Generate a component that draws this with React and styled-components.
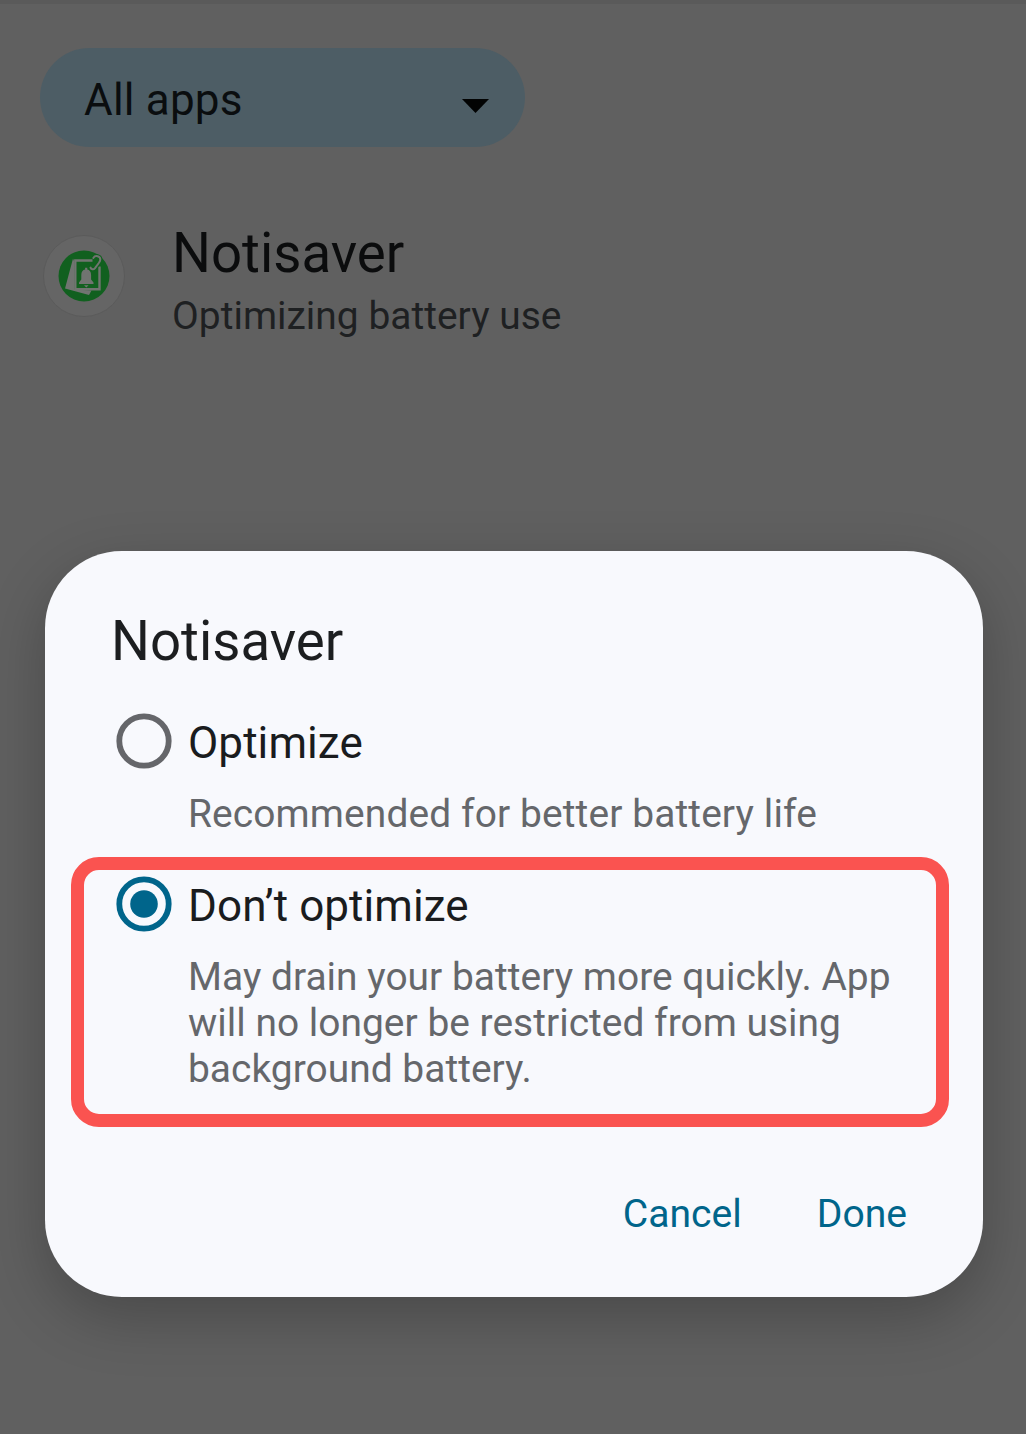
import React from "react";
import styled, { createGlobalStyle } from "styled-components";

const Global = createGlobalStyle`
  *{box-sizing:border-box}
  body{margin:0;background:#606060;font-family:Roboto,sans-serif}
`;
const Screen = styled.main`
  height:1434px;overflow:hidden;background:#606060;border-top:4px solid #5a5a5a;
  display:flex;flex-direction:column;align-items:flex-start;
`;
const Select = styled.button`
  width:485px;height:99px;margin:44px 0 0 40px;padding:5px 36px 0 44px;border:0;border-radius:50px;
  background:#4d5d65;color:#0a0d0f;display:flex;align-items:center;justify-content:space-between;
  font:400 44px/52px Roboto,sans-serif;letter-spacing:.2px;
`;
const Caret = styled.svg`width:27px;height:14px;margin-top:11px;`;
const AppRow = styled.section`
  display:flex;height:130px;margin:76px 0 0 43px;
`;
const AppIcon = styled.svg`width:82px;height:82px;margin:12px 47px 0 0;`;
const Names = styled.div`display:flex;flex-direction:column;`;
const AppName = styled.div`font-size:54.6px;line-height:64px;color:#0b0c0d;margin-top:-2px;`;
const Status = styled.div`font-size:38.9px;line-height:46px;letter-spacing:.03px;color:#1e2022;margin-top:8px;`;
const Dialog = styled.section`
  width:938px;height:746px;flex:none;margin:198px 0 0 45px;padding:58px 34px 0 26px;border-radius:77px;background:#f8f9fd;
  display:flex;flex-direction:column;box-shadow:0 20px 60px rgba(0,0,0,.24);
`;
const Title = styled.h1`margin:0 0 0 40px;font-weight:400;font-size:54.6px;line-height:64px;color:#1c1e20;`;
const Option = styled.div`
  display:flex;border-radius:28px;border:13px solid ${p => p.$marked ? "#fa5350" : "transparent"};
  height:${p => p.$marked ? 270 : 163}px;margin-top:${p => p.$marked ? 0 : 21}px;padding:6px 0 0 32px;
`;
const Radio = styled.svg`
  width:56px;height:56px;margin-right:16px;flex:none;color:${p => p.$on ? "#00658b" : "#65666a"};
`;
const Copy = styled.div`display:flex;flex-direction:column;white-space:nowrap;`;
const Label = styled.div`font-size:44px;line-height:52px;letter-spacing:.08px;color:#1a1c1e;margin-top:4px;`;
const Description = styled.div`font-size:38.9px;line-height:46px;letter-spacing:${p => p.$tracking}px;color:#65676b;margin-top:22px;`;
const Actions = styled.div`display:flex;justify-content:flex-end;gap:75px;margin:64px 42px 0 0;`;
const Action = styled.button`border:0;padding:0;background:none;color:#00658b;font:400 39.1px/46px Roboto,sans-serif;`;

function RadioMark({ on }) {
  return <Radio $on={on} viewBox="0 0 56 56" fill="none">
    <circle cx="28" cy="28" r="24.7" stroke="currentColor" strokeWidth="5.8" />
    {on && <circle cx="28" cy="28" r="13.8" fill="currentColor" />}
  </Radio>;
}

export default function App() {
  return <><Global /><Screen>
    <Select>All apps<Caret viewBox="0 0 27 14"><path d="M0 0h27L13.5 14z" fill="#020303" /></Caret></Select>
    <AppRow>
      <AppIcon viewBox="0 0 82 82" fill="none">
        <circle cx="41" cy="41" r="40.5" fill="#656565" stroke="#5b5b5b" />
        <circle cx="41" cy="41" r="25.5" fill="#11601f" />
        <path d="M30 23.5 22 53.5 46 60l2.5-4.5L31 54.5V26z" fill="#717471" />
        <path d="M49.5 25.5H32.3v28.7h24.2V31.5" stroke="#717471" strokeWidth="2.4" />
        <path d="M36 49v-1.5l2.3-3V40c0-3.2 1.5-5 3.8-5.5v-1.8h2.2v1.8c2.3.5 3.8 2.3 3.8 5.5v4.5l2.4 3V49zM41 50.3h4.6l-2.3 2.2z" fill="#717471" />
        <path d="M50.3 23c2-3.2 7-2 7 1.4 0 1.3-.5 2.2-1.5 3.6l-4 5.3c-1.3 1.6-3.8 1-4.3-.7l3-3.8" stroke="#11601f" strokeWidth="4" />
        <path d="M50.3 23c2-3.2 7-2 7 1.4 0 1.3-.5 2.2-1.5 3.6l-4 5.3c-1.3 1.6-3.8 1-4.3-.7" stroke="#717471" strokeWidth="2" strokeLinecap="round" strokeLinejoin="round" />
      </AppIcon>
      <Names><AppName>Notisaver</AppName><Status>Optimizing battery use</Status></Names>
    </AppRow>
    <Dialog>
      <Title>Notisaver</Title>
      <Option><RadioMark /><Copy><Label>Optimize</Label><Description $tracking={.12}>Recommended for better battery life</Description></Copy></Option>
      <Option $marked><RadioMark on /><Copy><Label>Don’t optimize</Label><Description $tracking={.03}>May drain your battery more quickly. App<br />will no longer be restricted from using<br />background battery.</Description></Copy></Option>
      <Actions><Action>Cancel</Action><Action>Done</Action></Actions>
    </Dialog>
  </Screen></>;
}
